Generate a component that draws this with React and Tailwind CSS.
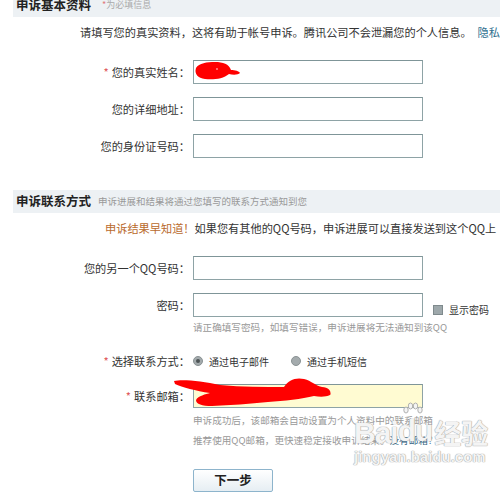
import React from "react";

const font = { fontFamily: '"Noto Sans CJK SC", "Liberation Sans", sans-serif' };

function Label({ star, children }) {
  return (
    <div className="w-[193px] shrink-0 text-right pr-[3px] text-[11.2px] leading-[16px] text-[#333] whitespace-nowrap">
      {star && <span className="text-[#e05a5a] mr-[3px]">*</span>}
      {children}：
    </div>
  );
}

function Input({ yellow }) {
  return (
    <div
      className={
        "w-[230px] h-[24px] border border-[#8ea3a6] border-t-[#7f9598] " +
        (yellow ? "bg-[#fffbd2]" : "bg-white")
      }
    />
  );
}

function Row({ star, label, yellow, right, className = "" }) {
  return (
    <div className={"flex items-center " + className}>
      <Label star={star}>{label}</Label>
      <Input yellow={yellow} />
      {right}
    </div>
  );
}

function Radio({ checked }) {
  return (
    <span className="inline-flex w-[10px] h-[10px] rounded-full bg-[#a4abad] border border-[#8a9294] items-center justify-center">
      {checked && <span className="w-[4px] h-[4px] rounded-full bg-[#4d5456]" />}
    </span>
  );
}

export default function App() {
  return (
    <div className="relative w-[500px] h-[495px] overflow-hidden bg-white" style={font}>
      {/* Section 1 header */}
      <div className="ml-[13px] -mt-[7px] h-[24px] bg-[#edf1f4] flex items-center pl-[3px] whitespace-nowrap">
        <span className="text-[12.5px] font-bold text-[#222]">申诉基本资料</span>
        <span className="ml-[11px] text-[9px] text-[#aaa]">
          <span className="text-[#e07a7a]">*</span>为必填信息
        </span>
      </div>

      <div className="mt-[7px] pl-[80px] text-[11.2px] leading-[16px] text-[#333] whitespace-nowrap">
        请填写您的真实资料，这将有助于帐号申诉。腾讯公司不会泄漏您的个人信息。
        <span className="ml-[6px] text-[#2f6f8f]">隐私政策</span>
      </div>

      <Row className="mt-[20px]" star label="您的真实姓名" />
      <Row className="mt-[13px]" label="您的详细地址" />
      <Row className="mt-[13px]" label="您的身份证号码" />

      {/* Section 2 header */}
      <div className="ml-[13px] mt-[32px] h-[23px] bg-[#edf1f4] flex items-center pl-[3px] whitespace-nowrap">
        <span className="text-[12.5px] font-bold text-[#222]">申诉联系方式</span>
        <span className="ml-[7px] text-[9.5px] text-[#999]">申诉进展和结果将通过您填写的联系方式通知到您</span>
      </div>

      <div className="mt-[7px] pl-[105px] text-[11.2px] leading-[16px] text-[#333] whitespace-nowrap">
        <span className="text-[#b96a2c]">申诉结果早知道！</span>如果您有其他的QQ号码，申诉进展可以直接发送到这个QQ上
      </div>

      <Row className="mt-[20px]" label="您的另一个QQ号码" />
      <Row
        className="mt-[13px]"
        label="密码"
        right={
          <div className="ml-[10px] mt-[9px] flex items-center gap-[6px]">
            <span className="w-[10px] h-[10px] bg-[#9ea8ab] border border-[#7f8a8d]" />
            <span className="text-[10px] text-[#333]">显示密码</span>
          </div>
        }
      />
      <div className="mt-[3px] pl-[193px] text-[9.6px] leading-[14px] text-[#999] whitespace-nowrap">
        请正确填写密码，如填写错误，申诉进展将无法通知到该QQ
      </div>

      <div className="mt-[19px] flex items-center">
        <Label star>选择联系方式</Label>
        <div className="flex items-center text-[10px] text-[#333]">
          <Radio checked />
          <span className="ml-[6px]">通过电子邮件</span>
          <span className="ml-[22px]">
            <Radio />
          </span>
          <span className="ml-[6px]">通过手机短信</span>
        </div>
      </div>

      <Row className="mt-[15px]" star label="联系邮箱" yellow />

      <div className="mt-[2px] pl-[193px] text-[9.6px] leading-[20px] text-[#999] whitespace-nowrap">
        <div>申诉成功后，该邮箱会自动设置为个人资料中的联系邮箱</div>
        <div>
          推荐使用QQ邮箱，更快速稳定接收申诉结果。<span className="text-[#2f5f7f]">没有邮箱?</span>
        </div>
      </div>

      <div className="mt-[16px] pl-[193px]">
        <button className="w-[80px] h-[23px] rounded-[2px] border border-[#8db4cc] bg-gradient-to-b from-white to-[#e6eef3] text-[12.5px] font-bold text-[#222]">
          下一步
        </button>
      </div>

      {/* Red scribble over name field */}
      <svg className="absolute left-[193px] top-[60px]" width="52" height="22" viewBox="0 0 52 22">
        <path
          d="M3 8 C6 3 14 2 22 2 C30 2 36 4 38 10 C42 10 46 11 47 13 C45 15 40 15 36 14 C30 19 20 20 12 19 C5 18 1 14 3 8 Z"
          fill="#f00"
        />
        <circle cx="24" cy="9" r="0.9" fill="#f99" />
      </svg>

      {/* Red scribble over email field */}
      <svg className="absolute left-[172px] top-[375px]" width="165" height="34" viewBox="0 0 165 34">
        <path
          d="M2 6 C10 4 30 6 48 10 C70 12 92 12 112 12 C116 5 124 2 132 4 C140 6 142 10 150 12 C156 12 160 16 158 20 C154 22 148 22 142 21 C130 24 112 26 96 27 C78 29 58 30 40 31 C30 31 24 29 24 25 C26 21 34 19 38 18 C24 16 10 12 3 9 Z"
          fill="#f00"
        />
        <path d="M146 17 C150 16 156 17 159 19 C156 21 150 21 146 20 Z" fill="#f00" />
      </svg>

      {/* Baidu watermark */}
      <div className="absolute left-[354px] top-[416px] pointer-events-none select-none" style={{ fontFamily: '"Liberation Sans", "Noto Sans CJK SC", sans-serif' }}>
        <div className="flex items-end text-[#f4f4f4] [text-shadow:0_0_1px_#9a9a9a,0_0_1px_#9a9a9a]">
          <span className="text-[30px] font-bold leading-[30px] tracking-[-1px]">Bai</span>
          <span className="relative">
            <svg className="absolute left-[4px] -top-[14px]" width="22" height="16" viewBox="0 0 22 16">
              <g fill="#f4f4f4" stroke="#a0a0a0" strokeWidth="0.8">
                <ellipse cx="4" cy="8" rx="2.2" ry="3" />
                <ellipse cx="8.5" cy="4" rx="2.2" ry="3" />
                <ellipse cx="13.5" cy="4" rx="2.2" ry="3" />
                <ellipse cx="18" cy="8" rx="2.2" ry="3" />
              </g>
            </svg>
            <span className="text-[30px] font-bold leading-[30px] tracking-[-1px]">du</span>
          </span>
          <span className="ml-[2px] text-[27px] font-bold leading-[30px]" style={{ fontFamily: '"Noto Sans CJK SC", sans-serif' }}>经验</span>
        </div>
        <div className="mt-[1px] text-[15px] font-bold leading-[16px] text-[#f4f4f4] [text-shadow:0_0_1px_#9a9a9a,0_0_1px_#9a9a9a]">
          jingyan.baidu.com
        </div>
      </div>
    </div>
  );
}
